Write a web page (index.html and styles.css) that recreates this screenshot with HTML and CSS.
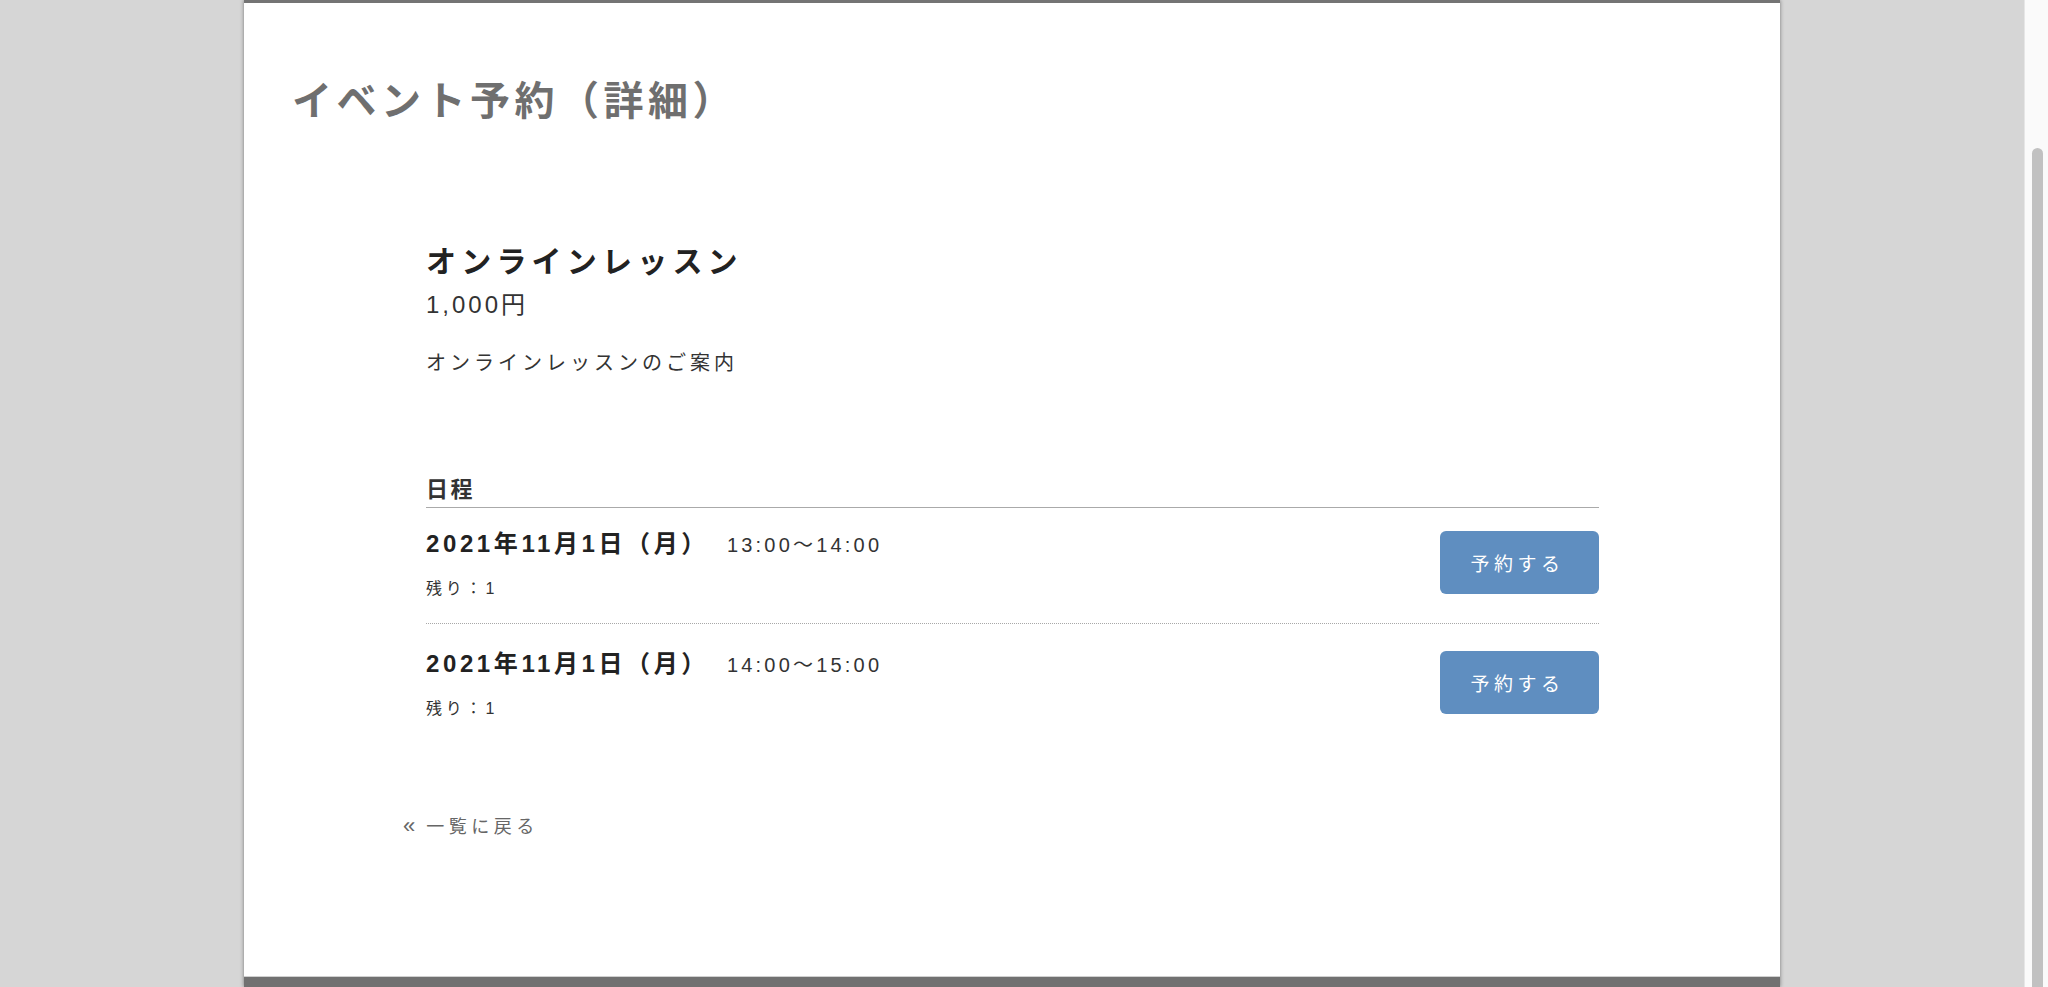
FILE: index.html
```html
<!DOCTYPE html>
<html lang="ja">
<head>
    <meta charset="UTF-8">
    <meta name="viewport" content="width=device-width, initial-scale=1.0">
    <title>イベント予約（詳細）</title>
    <link rel="stylesheet" href="styles.css">
</head>
<body>
    <div class="viewport">
        <div class="page">
            <div class="header-edge"></div>

            <main class="main">
                <h1 class="page-title">イベント予約（詳細）</h1>

                <div class="detail">
                    <section class="event">
                        <h2 class="event-name">オンラインレッスン</h2>
                        <p class="event-price">1,000円</p>
                        <p class="event-desc">オンラインレッスンのご案内</p>

                        <h3 class="schedule-title">日程</h3>
                        <div class="schedule">
                            <div class="slot">
                                <div class="slot-info">
                                    <p class="slot-date">2021年11月1日（月）<span class="slot-time">13:00〜14:00</span></p>
                                    <p class="slot-left">残り：1</p>
                                </div>
                                <button class="button">予約する</button>
                            </div>
                            <div class="slot">
                                <div class="slot-info">
                                    <p class="slot-date">2021年11月1日（月）<span class="slot-time">14:00〜15:00</span></p>
                                    <p class="slot-left">残り：1</p>
                                </div>
                                <button class="button">予約する</button>
                            </div>
                        </div>
                    </section>

                    <a class="back-link" href="#"><span class="back-arrow">«</span>一覧に戻る</a>
                </div>
            </main>

            <div class="footer-edge"></div>
        </div>
    </div>

    <div class="scrollbar">
        <div class="scrollbar-thumb"></div>
    </div>
</body>
</html>
```

FILE: styles.css
```css
html, body {
    height: 100%;
}

body {
    margin: 0;
    display: flex;
    overflow: hidden;
    font-family: "Liberation Sans", "Noto Sans CJK JP", sans-serif;
    color: #222;
}

.viewport {
    flex: 1;
    height: 100%;
    background: #d6d6d6;
}

.page {
    width: 1536px;
    height: 100%;
    margin: 0 auto;
    display: flex;
    flex-direction: column;
    box-shadow: 0 0 4px rgba(0, 0, 0, 0.45);
}

.header-edge {
    height: 3px;
    background: #747474;
}

.footer-edge {
    height: 10px;
    background: #717171;
    border-top: 1px solid #d0d0d0;
}

.main {
    flex: 1;
    background: #fff;
}

.page-title {
    margin: 0;
    padding: 68px 0 0 48px;
    font-size: 40px;
    line-height: 60px;
    font-weight: bold;
    letter-spacing: 4.5px;
    color: #6f6f6f;
}

.detail {
    width: 1218px;
    margin: 0 auto;
}

.event {
    padding: 111px 22px 0 23px;
}

.event p {
    margin: 0;
}

.event-name {
    margin: 0;
    font-size: 30px;
    line-height: 40px;
    font-weight: bold;
    letter-spacing: 5.2px;
    color: #222;
}

.event .event-price {
    margin-top: 5px;
    font-size: 24px;
    line-height: 36px;
    letter-spacing: 3px;
    color: #333;
}

.event .event-desc {
    margin-top: 25px;
    font-size: 20px;
    line-height: 30px;
    letter-spacing: 4px;
    color: #333;
}

.schedule-title {
    margin: 96px 0 0;
    padding-bottom: 1px;
    font-size: 22px;
    line-height: 32px;
    font-weight: bold;
    letter-spacing: 2.5px;
    color: #333;
    border-bottom: 1px solid #aaa;
}

.slot {
    display: flex;
    justify-content: space-between;
    align-items: center;
    padding: 20px 0 22px;
}

.slot:first-child {
    padding-top: 16px;
    border-bottom: 1px dotted #a8a8a8;
}

.event .slot-date {
    padding-top: 3px;
    font-size: 24px;
    line-height: 34px;
    font-weight: bold;
    letter-spacing: 3.6px;
    color: #222;
}

.slot-time {
    margin-left: 18px;
    font-size: 20px;
    font-weight: normal;
    letter-spacing: 3.2px;
    color: #333;
}

.event .slot-left {
    margin-top: 15px;
    font-size: 16px;
    line-height: 24px;
    letter-spacing: 3.8px;
    color: #333;
}

.button {
    width: 159px;
    height: 63px;
    padding: 0 4px 0 0;
    border: none;
    border-radius: 6px;
    background: #5f8ec0;
    color: #fff;
    font-family: inherit;
    font-size: 19px;
    letter-spacing: 4.5px;
    cursor: pointer;
}

.back-link {
    display: inline-block;
    margin-top: 68px;
    font-size: 18px;
    line-height: 30px;
    letter-spacing: 4.5px;
    color: #666;
    text-decoration: none;
}

.back-arrow {
    margin-right: 11px;
    font-size: 22px;
    letter-spacing: 0;
}

.scrollbar {
    width: 23px;
    height: 100%;
    display: flex;
    flex-direction: column;
    background: #fafafa;
    border-left: 1px solid #e6e6e6;
}

.scrollbar-thumb {
    flex: 1;
    width: 11px;
    margin: 148px 0 0 7px;
    border-radius: 6px 6px 0 0;
    background: #c1c1c1;
}
```
